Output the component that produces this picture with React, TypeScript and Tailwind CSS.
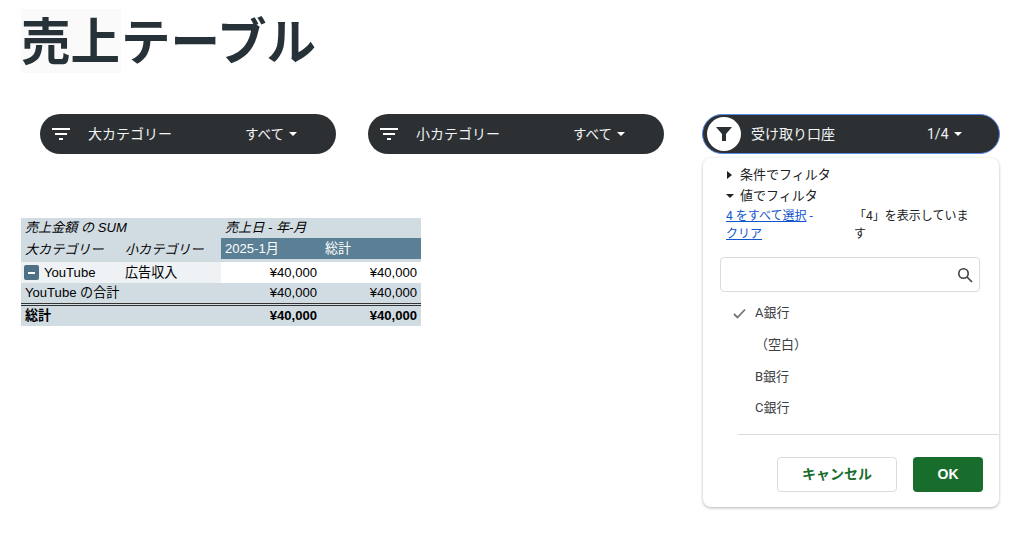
import React from "react";

const jp = "font-['Roboto','Noto_Sans_CJK_JP',sans-serif]";
const tb = "font-['Liberation_Sans','Noto_Sans_CJK_JP',sans-serif]";

function FilterLines() {
  return (
    <svg width="18" height="12" viewBox="0 0 18 12" className="shrink-0">
      <rect x="0" y="0" width="18" height="2" fill="#fff" />
      <rect x="3" y="5" width="12" height="2" fill="#fff" />
      <rect x="7" y="10" width="4" height="2" fill="#fff" />
    </svg>
  );
}

function Caret({ color = "#fff" }: { color?: string }) {
  return (
    <svg width="8" height="4" viewBox="0 0 8 4" className="shrink-0">
      <path d="M0 0h8L4 4z" fill={color} />
    </svg>
  );
}

function Pill({ label }: { label: string }) {
  return (
    <div className={`${jp} flex h-10 w-[296px] items-center rounded-[20px] bg-[#2d3033] pl-3 text-[14px] text-[#f1f3f4]`}>
      <FilterLines />
      <span className="ml-[18px] w-[157px]">{label}</span>
      <span className="text-[13.5px]">すべて</span>
      <span className="ml-[5px]"><Caret /></span>
    </div>
  );
}

function Dropdown() {
  return (
    <div className={`${jp} absolute left-0 top-[43px] h-[349px] w-[296px] rounded-lg bg-white pt-[8px] text-[13px] text-[#202124] shadow-[0_1px_3px_rgba(60,64,67,0.4)]`}>
      <div className="flex h-[18px] items-center pl-[24px]">
        <svg width="5" height="8" viewBox="0 0 5 8" className="mr-[8px]"><path d="M0 0l5 4-5 4z" fill="#202124" /></svg>
        <span>条件でフィルタ</span>
      </div>
      <div className="mt-[3px] flex h-[18px] items-center pl-[23px]">
        <span className="mr-[6px]"><Caret color="#202124" /></span>
        <span>値でフィルタ</span>
      </div>
      <div className="mt-[2px] flex pl-[23px] text-[12px] leading-[18px]">
        <div className="w-[128px] text-[#1155cc]">
          <span className="underline">4 をすべて選択</span> -<br />
          <span className="underline">クリア</span>
        </div>
        <div className="w-[120px] whitespace-nowrap">
          「4」を表示していま<br />す
        </div>
      </div>
      <div className="ml-[17px] mt-[14px] flex h-[35px] w-[260px] items-center justify-end rounded border border-[#dadce0] pr-[6px]">
        <svg width="16" height="16" viewBox="0 0 16 16" fill="none" stroke="#3c4043" strokeWidth="1.6">
          <circle cx="6.5" cy="6.5" r="4.7" />
          <path d="M10 10l5 5" />
        </svg>
      </div>
      <ul className="mt-[5px] text-[13px] text-[#3c4043]">
        <li className="flex h-[32px] items-center pl-[30px]">
          <svg width="13" height="11" viewBox="0 0 13 11" fill="none" stroke="#70757a" strokeWidth="1.8" className="mr-[9px]">
            <path d="M1 6l3.5 3.5L12 1.5" />
          </svg>
          A銀行
        </li>
        <li className="flex h-[32px] items-center pl-[52px]">（空白）</li>
        <li className="flex h-[31px] items-center pl-[52px]">B銀行</li>
        <li className="flex h-[32px] items-center pl-[52px]">C銀行</li>
      </ul>
      <div className="ml-[35px] mt-[10px] h-px bg-[#dadce0]" />
      <div className="mt-[22px] flex justify-end gap-4 pr-4">
        <button className="h-[35px] w-[120px] rounded border border-[#dadce0] bg-white text-[14px] font-bold text-[#186d2c]">キャンセル</button>
        <button className={`${tb} h-[35px] w-[70px] rounded bg-[#186d2c] text-[14px] font-bold text-white`}>OK</button>
      </div>
    </div>
  );
}

function Table() {
  const c = "flex items-center overflow-hidden whitespace-nowrap pl-[4px]";
  const r = "flex items-center justify-end pr-[4px]";
  return (
    <div className={`${tb} ml-[21px] mt-[64px] grid w-[400px] grid-cols-[100px_100px_100px_100px] grid-rows-[20px_24px_21px_20px_3px_20px] bg-[#d0dbe2] text-[13.1px] leading-none text-[#000]`}>
      <div className={`${c} col-span-2 italic`}>売上金額 の SUM</div>
      <div className={`${c} col-span-2 italic`}>売上日 - 年-月</div>
      <div className={`${c} italic`}>大カテゴリー</div>
      <div className={`${c} italic`}>小カテゴリー</div>
      <div className={`${c} mb-[3px] bg-[#5b7f94] text-white`}>2025-1月</div>
      <div className={`${c} mb-[3px] bg-[#5b7f94] text-white`}>総計</div>
      <div className="flex items-center overflow-hidden whitespace-nowrap bg-[#eef2f4] pl-[3px]">
        <span className="mr-[5px] flex h-[15px] w-[15px] items-center justify-center rounded-[2px] bg-[#4e7186]">
          <span className="h-[2px] w-[7px] bg-white" />
        </span>
        YouTube
      </div>
      <div className={`${c} bg-[#eef2f4]`}>広告収入</div>
      <div className={`${r} bg-white`}>¥40,000</div>
      <div className={`${r} bg-white`}>¥40,000</div>
      <div className={`${c} col-span-2`}>YouTube の合計</div>
      <div className={r}>¥40,000</div>
      <div className={r}>¥40,000</div>
      <div className="col-span-4 border-y border-[#333] bg-[#d0dbe2]" />
      <div className={`${c} col-span-2 font-bold`}>総計</div>
      <div className={`${r} font-bold`}>¥40,000</div>
      <div className={`${r} font-bold`}>¥40,000</div>
    </div>
  );
}

export default function App() {
  return (
    <div className="h-[547px] w-[1024px] overflow-hidden bg-white pt-[9px]">
      <h1 className="ml-[21px] flex h-[64px] font-['Noto_Sans_CJK_JP',sans-serif] text-[49.5px] font-bold leading-[60px] text-[#263238]">
        <span className="h-[64px] w-[100px] bg-[#fafafa]">売上</span>テーブル
      </h1>
      <div className="ml-[40px] mt-[41px] flex">
        <Pill label="大カテゴリー" />
        <div className="ml-[32px]"><Pill label="小カテゴリー" /></div>
        <div className={`${jp} relative ml-[38px] flex h-10 w-[298px] items-center rounded-[20px] border border-[#5a8aec] bg-[#2d3033] pl-[4px] text-[14px] text-[#f1f3f4]`}>
          <span className="flex h-[34px] w-[34px] items-center justify-center rounded-full bg-white">
            <svg width="16" height="14" viewBox="0 0 16 14"><path d="M0 0h16L10 7v7H6V7z" fill="#2d3033" /></svg>
          </span>
          <span className="ml-[10px] w-[176px]">受け取り口座</span>
          <span>1/4</span>
          <span className="ml-[5px]"><Caret /></span>
          <Dropdown />
        </div>
      </div>
      <Table />
    </div>
  );
}
